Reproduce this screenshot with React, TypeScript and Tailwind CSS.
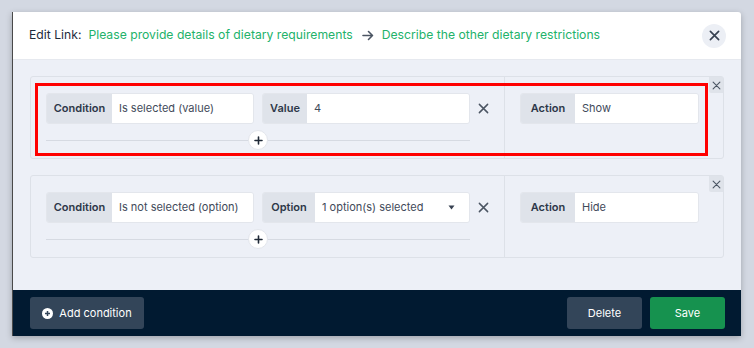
import React from "react";

const font = { fontFamily: "Inter, 'Noto Sans', sans-serif" };

function XIcon({ size = 12, stroke = "#4b5563", width = 2 }: { size?: number; stroke?: string; width?: number }) {
  return (
    <svg width={size} height={size} viewBox="0 0 12 12" fill="none">
      <path d="M1.5 1.5L10.5 10.5M10.5 1.5L1.5 10.5" stroke={stroke} strokeWidth={width} strokeLinecap="round" />
    </svg>
  );
}

function Group({ label, value, labelW, w, caret }: { label: string; value: string; labelW: string; w: string; caret?: boolean }) {
  return (
    <div className={`flex h-[31px] ${w} rounded-[3px] overflow-hidden border border-[#e3e6ec]`}>
      <div className={`${labelW} shrink-0 bg-[#dfe3ea] flex items-center justify-center text-[11px] font-semibold text-[#2d3748]`}>
        {label}
      </div>
      <div className="flex-1 bg-white flex items-center pl-[7px] pr-[14px] text-[11px] text-[#3f4a5a]">
        <span className="flex-1">{value}</span>
        {caret && (
          <svg width="7" height="5" viewBox="0 0 7 5"><path d="M0.5 0.5h6L3.5 4.5z" fill="#374151" /></svg>
        )}
      </div>
    </div>
  );
}

function Card({ cond, label2, val2, action, caret, highlight }: { cond: string; label2: string; val2: string; action: string; caret?: boolean; highlight?: boolean }) {
  return (
    <div className="relative flex h-[83px] border border-[#dde1e8] rounded-[3px] bg-[#edf0f7]">
      <div className="w-[474px] border-r border-[#dde1e8] pl-[15px] pt-[16px]">
        <div className="flex items-center">
          <Group label="Condition" value={cond} labelW="w-[65px]" w="w-[208px]" />
          <div className="w-[8px]" />
          <Group label={label2} value={val2} labelW={label2 === "Value" ? "w-[44px]" : "w-[52px]"} w="w-[208px]" caret={caret} />
          <div className="ml-[7px] w-[12px] flex justify-center">
            <XIcon size={11} stroke="#4b5563" width={1.6} />
          </div>
        </div>
        <div className="relative mt-[16px] w-[424px] h-px bg-[#d6dae2]">
          <div className="absolute left-[202px] top-[-10px] w-[20px] h-[20px] rounded-full bg-white border border-[#e3e6ec] flex items-center justify-center">
            <svg width="9" height="9" viewBox="0 0 9 9"><path d="M4.5 1v7M1 4.5h7" stroke="#1f2937" strokeWidth="1.6" strokeLinecap="round" /></svg>
          </div>
        </div>
      </div>
      <div className="flex-1 pl-[15px] pt-[16px]">
        <Group label="Action" value={action} labelW="w-[54px]" w="w-[179px]" />
      </div>
      <div className="absolute right-0 top-0 w-[14px] h-[16px] bg-[#dfe3ea] flex items-center justify-center rounded-bl-[2px]">
        <XIcon size={9} stroke="#4b5563" width={1.5} />
      </div>
      {highlight && (
        <div className="absolute left-[4px] top-[6px] w-[673px] h-[73px] border-[3px] border-[#ff0000] pointer-events-none" />
      )}
    </div>
  );
}

export default function App() {
  return (
    <div className="w-[754px] h-[348px] bg-[#d3d8e2] pl-[12px] pt-[12px] overflow-hidden" style={font}>
      <div className="w-[729px] h-[324px] flex flex-col bg-white shadow-[0_2px_6px_rgba(0,0,0,0.25)] border-l border-[#4a4a4a] rounded-tr-[3px]">
        <div className="h-[47px] flex items-center pl-[16px] pr-[16px]">
          <span className="text-[12.2px] text-[#1e2b3c]">Edit Link:</span>
          <span className="ml-[7px] text-[12.2px] text-[#22b26a]">Please provide details of dietary requirements</span>
          <svg className="ml-[9px]" width="12" height="11" viewBox="0 0 12 11" fill="none">
            <path d="M1 5.5h9.5M6.5 1.5l4 4-4 4" stroke="#4b5563" strokeWidth="1.6" strokeLinecap="round" strokeLinejoin="round" />
          </svg>
          <span className="ml-[8px] text-[12.2px] text-[#22b26a]">Describe the other dietary restrictions</span>
          <div className="ml-auto w-[24px] h-[24px] rounded-full bg-[#eceff5] flex items-center justify-center mr-[-1px]">
            <XIcon size={11} stroke="#374151" width={1.8} />
          </div>
        </div>
        <div className="flex-1 bg-[#edf0f7] border-t border-[#e6e9ef] pt-[16px] px-[17px] flex flex-col gap-[16px]">
          <Card cond="Is selected (value)" label2="Value" val2="4" action="Show" highlight />
          <Card cond="Is not selected (option)" label2="Option" val2="1 option(s) selected" action="Hide" caret />
        </div>
        <div className="h-[46px] bg-[#011a31] flex items-center pl-[17px] pr-[16px]">
          <div className="h-[32px] w-[114px] rounded-[3px] bg-[#334559] flex items-center justify-center gap-[6px] text-[11px] text-white">
            <svg width="11" height="11" viewBox="0 0 11 11"><circle cx="5.5" cy="5.5" r="5.5" fill="white" /><path d="M5.5 3v5M3 5.5h5" stroke="#334559" strokeWidth="1.5" /></svg>
            Add condition
          </div>
          <div className="ml-auto h-[32px] w-[75px] rounded-[3px] bg-[#334559] flex items-center justify-center text-[11px] text-white">
            Delete
          </div>
          <div className="ml-[8px] h-[32px] w-[75px] rounded-[3px] bg-[#16924f] flex items-center justify-center text-[11px] text-white">
            Save
          </div>
        </div>
      </div>
    </div>
  );
}
